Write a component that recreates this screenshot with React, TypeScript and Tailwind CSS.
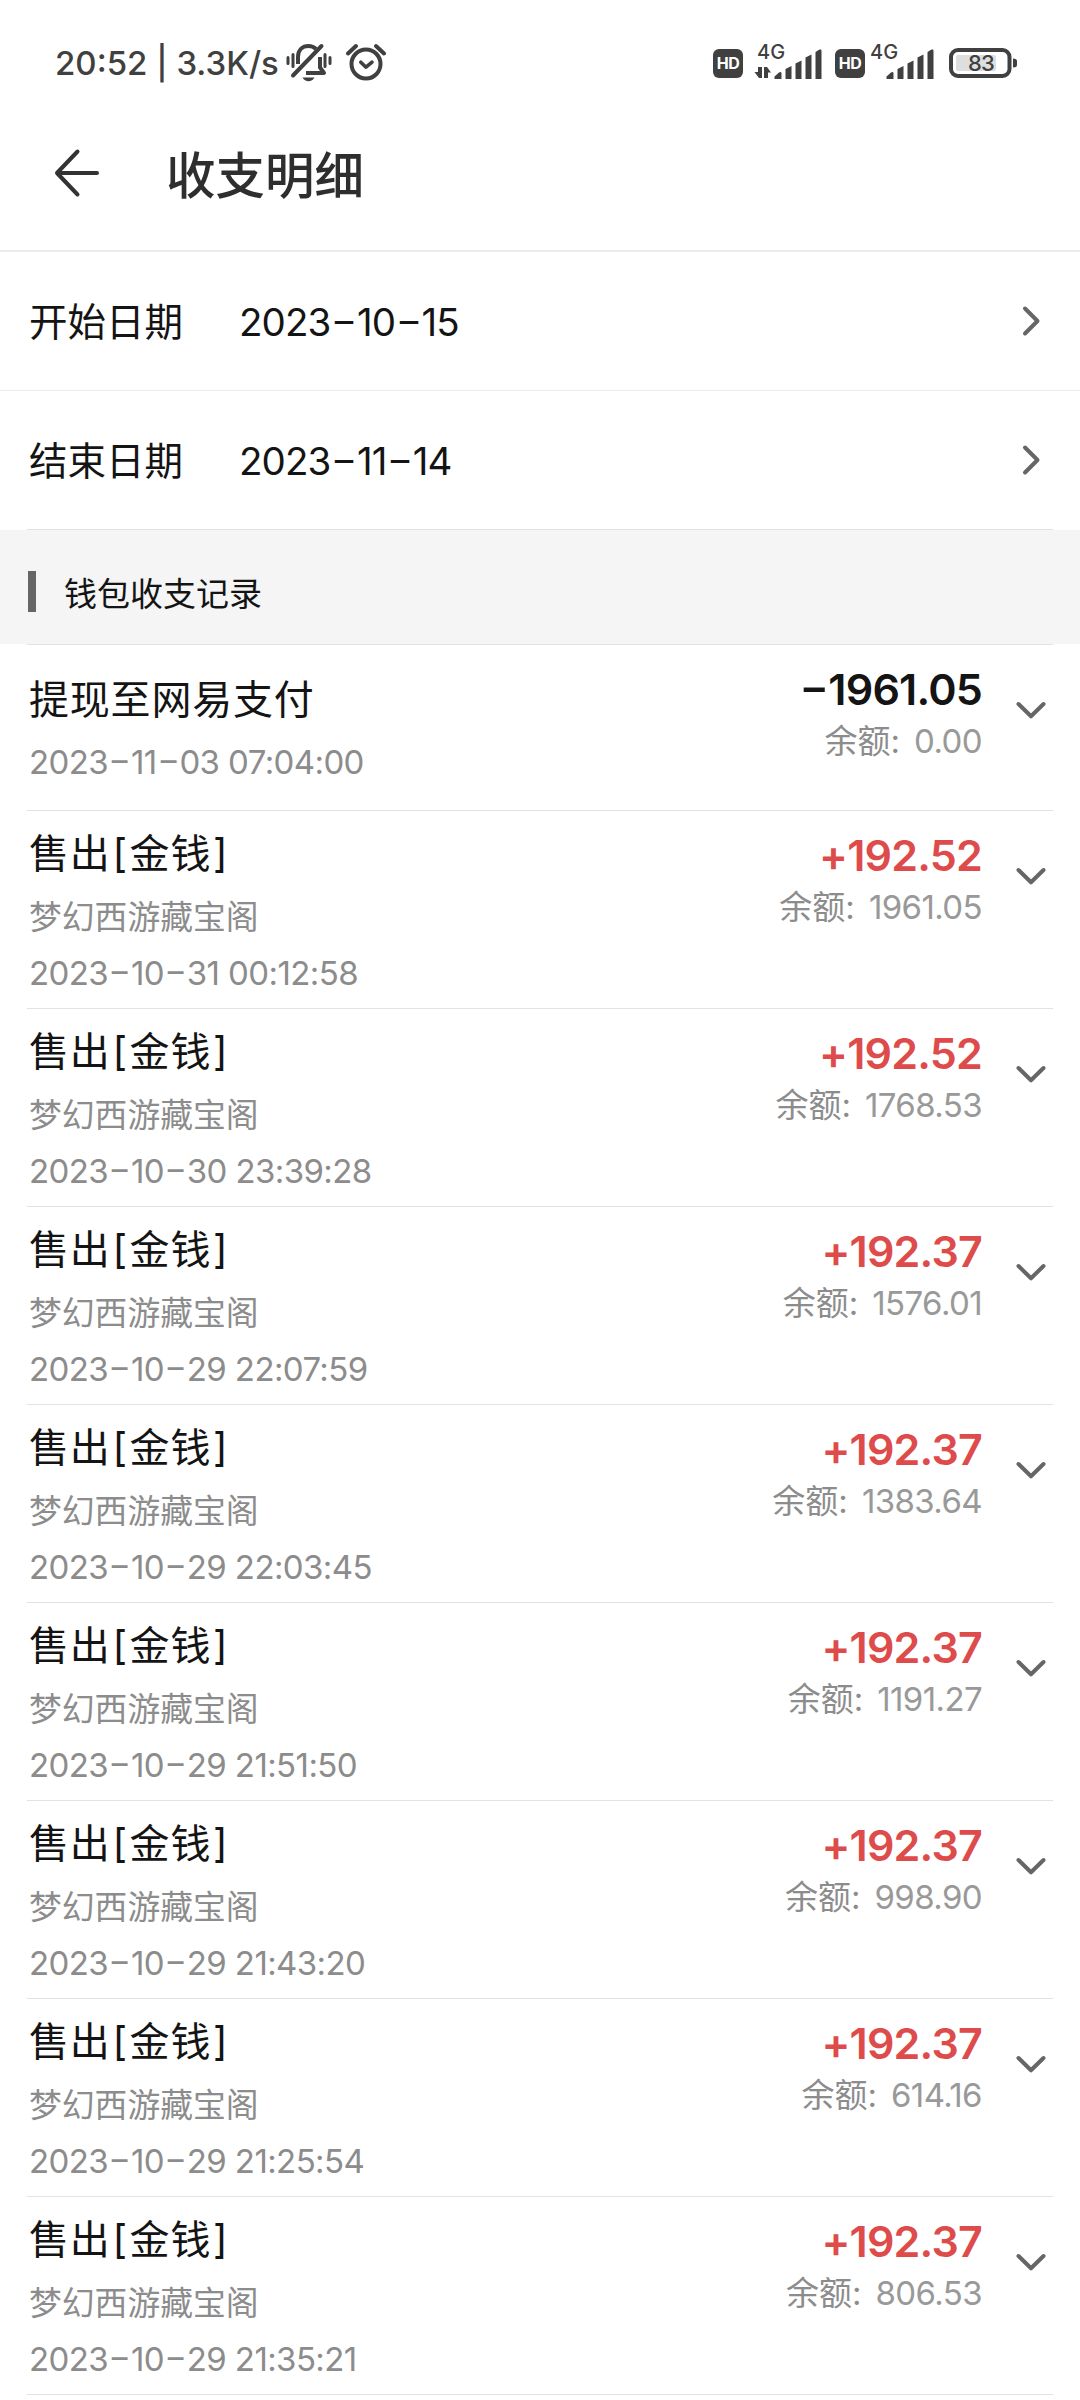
interface WalletRecord {
  title: string;
  shop?: string;
  time: string;
  amount: string;
  balance: string;
}

const records: WalletRecord[] = [
  { title: "提现至网易支付", time: "2023-11-03 07:04:00", amount: "-1961.05", balance: "0.00" },
  { title: "售出[金钱]", shop: "梦幻西游藏宝阁", time: "2023-10-31 00:12:58", amount: "+192.52", balance: "1961.05" },
  { title: "售出[金钱]", shop: "梦幻西游藏宝阁", time: "2023-10-30 23:39:28", amount: "+192.52", balance: "1768.53" },
  { title: "售出[金钱]", shop: "梦幻西游藏宝阁", time: "2023-10-29 22:07:59", amount: "+192.37", balance: "1576.01" },
  { title: "售出[金钱]", shop: "梦幻西游藏宝阁", time: "2023-10-29 22:03:45", amount: "+192.37", balance: "1383.64" },
  { title: "售出[金钱]", shop: "梦幻西游藏宝阁", time: "2023-10-29 21:51:50", amount: "+192.37", balance: "1191.27" },
  { title: "售出[金钱]", shop: "梦幻西游藏宝阁", time: "2023-10-29 21:43:20", amount: "+192.37", balance: "998.90" },
  { title: "售出[金钱]", shop: "梦幻西游藏宝阁", time: "2023-10-29 21:25:54", amount: "+192.37", balance: "614.16" },
  { title: "售出[金钱]", shop: "梦幻西游藏宝阁", time: "2023-10-29 21:35:21", amount: "+192.37", balance: "806.53" },
];

// Widens hyphens and brackets, which are narrow next to the digits and hanzi
const Spaced = ({ text }: { text: string }) => (
  <>
    {text.split(/([-[\]])/).map((part, index) => {
      if (part === "-") {
        return (
          <span key={index} className="mx-[0.125em] inline-block origin-center -translate-y-[0.05em] scale-x-150">
            -
          </span>
        );
      }
      if (part === "[" || part === "]") {
        return (
          <span key={index} className="px-[0.045em]">
            {part}
          </span>
        );
      }
      return part;
    })}
  </>
);

const MutedBell = () => (
  <svg className="ml-[5px] mr-px h-10 w-12 shrink-0" viewBox="0 0 48 40" fill="none" stroke="#404040">
    <path d="M3 14.500v6M8 11.500v12M40 11.500v12M45 14.500v6" strokeWidth="3" strokeLinecap="round" />
    <path
      d="M13 21V14C13 7 17.500 3 23.500 3c3 0 5.500 1 7.500 3M35 14v10.500l4 5.500H21"
      strokeWidth="4"
      strokeLinejoin="round"
    />
    <path d="M8 32.500L36.500 3" strokeWidth="4" strokeLinecap="round" />
    <path d="M17.500 34.500h12c-1.500 2.600-3.500 3.800-6 3.800s-4.500-1.200-6-3.800z" fill="#404040" stroke="none" />
  </svg>
);

const AlarmIcon = () => (
  <svg className="ml-3 h-10 w-10 shrink-0" viewBox="0 0 40 40" fill="none" stroke="#404040">
    <circle cx="20" cy="21" r="14.500" strokeWidth="4" />
    <path d="M2 10.500L10 3M38 10.500L30 3" strokeWidth="4" strokeLinecap="round" />
    <path d="M14.800 19.200l5.200 5 6-5" strokeWidth="3.600" strokeLinecap="round" strokeLinejoin="round" />
  </svg>
);

const HdBadge = () => (
  <span className="flex h-[29px] w-[30px] shrink-0 items-center justify-center rounded-md bg-[#404040] text-[16px] font-bold leading-none tracking-[-0.5px] text-white">
    HD
  </span>
);

const Signal = ({ transfer = false }: { transfer?: boolean }) => (
  <svg className="h-12 w-[68px] shrink-0 overflow-visible" viewBox="0 -4 68 48" fill="#404040">
    <text x={transfer ? 2 : 3} y="16" fontSize="20" fontWeight="500">
      4G
    </text>
    {transfer && <path d="M7 24v11H4L-0.500 29h3.500V24zM9 35V24h3l4 5.500h-3V35z" />}
    <path d="M19.500 33.500l4.500-4q2-1 2.500 0.500v6h-7zM30.500 26l6-3V36h-6zM40.500 20.500l6-3V36h-6zM50.500 14.500l6-3V36h-6zM60.500 9l4-2.500q2-0.500 2 1V36h-6z" />
  </svg>
);

const Battery = () => (
  <svg className="h-[30px] w-[69px] shrink-0" viewBox="0 0 69 30" fill="none">
    <rect x="2" y="2" width="58.500" height="26" rx="7" stroke="#404040" strokeWidth="4" />
    <rect x="7" y="7" width="40" height="16" rx="2" fill="#dedede" />
    <path d="M64 10.500q4 0 4 2.500v4q0 2.500-4 2.500z" fill="#404040" />
    <text x="19" y="23" fontSize="22" fontWeight="500" letterSpacing="-0.8" fill="#404040">
      83
    </text>
  </svg>
);

const ChevronRight = () => (
  <svg className="ml-auto h-8 w-5" viewBox="0 0 20 32" fill="none" stroke="#666">
    <path d="M3 3.500L15.500 16 3 28.500" strokeWidth="4" strokeLinecap="round" strokeLinejoin="round" />
  </svg>
);

const ChevronDown = () => (
  <svg className="mt-[55px] h-5 w-8 shrink-0" viewBox="0 0 32 20" fill="none" stroke="#666">
    <path d="M3.500 4L16 16.300 28.500 4" strokeWidth="4" strokeLinecap="round" strokeLinejoin="round" />
  </svg>
);

const DateRow = ({ label, date }: { label: string; date: string }) => (
  <div className="flex h-[138px] items-center pl-[29px] pr-[38px] text-[38.500px] leading-none text-[#141414]">
    <span className="w-[210px] pt-[3px]">{label}</span>
    <span className="pt-[3px] tracking-[-0.9px]">
      <Spaced text={date} />
    </span>
    <ChevronRight />
  </div>
);

const RecordRow = ({ record }: { record: WalletRecord }) => (
  <div
    className={`mx-[27px] flex border-b border-[#e2e2e2] ${record.shop ? "h-[198px]" : "h-[166px]"}`}
  >
    <div className={`flex flex-1 flex-col pl-[2px] ${record.shop ? "pt-[18px]" : "pt-[30px]"}`}>
      <span className="h-[50px] text-[40px] leading-[50px] tracking-[0.8px] text-[#141414]">
        <Spaced text={record.title} />
      </span>
      {record.shop && (
        <span className="mt-[18px] h-10 text-[32.800px] leading-10 text-[#8c8c8c]">{record.shop}</span>
      )}
      <span
        className={`h-10 text-[33px] leading-10 tracking-[-0.6px] text-[#8c8c8c] ${
          record.shop ? "mt-[16px]" : "mt-[17px]"
        }`}
      >
        <Spaced text={record.time} />
      </span>
    </div>
    <div className="flex flex-col items-end pt-[19px]">
      <span
        className={`h-[50px] text-[43px] font-semibold leading-[50px] tracking-[-0.8px] ${
          record.amount.startsWith("+") ? "text-[#de4b4b]" : "text-[#141414]"
        }`}
      >
        <Spaced text={record.amount} />
      </span>
      <span className="mt-[7px] flex h-10 gap-[14px] text-[33px] leading-10 text-[#8c8c8c]">
        <span>余额:</span>
        <span className="tracking-[-0.6px] text-[#999]">{record.balance}</span>
      </span>
    </div>
    <div className="ml-[33px] flex w-[38px]">
      <ChevronDown />
    </div>
  </div>
);

export default function App() {
  return (
    <div className="h-[2400px] w-[1080px] overflow-hidden bg-white font-[Inter,'Noto_Sans_CJK_SC',sans-serif]">
      <div className="flex h-[124px] items-center pl-[55px] pr-[62px] pt-[2px] text-[#404040]">
        <span className="w-[225px] whitespace-nowrap pt-[2px] text-[33px] font-medium">20:52 | 3.3K/s</span>
        <MutedBell />
        <AlarmIcon />
        <div className="ml-auto flex items-center">
          <HdBadge />
          <div className="ml-[12px] mr-[12px]">
            <Signal transfer />
          </div>
          <HdBadge />
          <div className="ml-[2px] mr-[14px]">
            <Signal />
          </div>
          <Battery />
        </div>
      </div>
      <div className="flex h-[128px] items-start border-b-2 border-[#ebebeb] pl-[53px] pt-[22px]">
        <svg className="mt-[2px] h-[50px] w-12" viewBox="0 0 48 50" fill="none" stroke="#333">
          <path
            d="M44 25H4M24.500 3.500L4 25l20.500 21.500"
            strokeWidth="4"
            strokeLinecap="round"
            strokeLinejoin="round"
          />
        </svg>
        <h1 className="ml-[65px] mt-[2px] text-[49.500px] font-medium leading-[56px] text-[#2e2e2e]">收支明细</h1>
      </div>
      <DateRow label="开始日期" date="2023-10-15" />
      <div className="h-px bg-[#ededed]" />
      <DateRow label="结束日期" date="2023-11-14" />
      <div className="mx-[27px] h-px bg-[#e2e2e2]" />
      <div className="flex h-[114px] items-center bg-[#f5f5f5] pl-7 pt-[9px]">
        <div className="h-[41px] w-2 bg-[#666]" />
        <span className="ml-[28px] pt-[6px] text-[33px] leading-none text-[#141414]">钱包收支记录</span>
      </div>
      <div className="mx-[27px] h-px bg-[#e2e2e2]" />
      {records.map((record) => (
        <RecordRow key={record.time} record={record} />
      ))}
    </div>
  );
}
